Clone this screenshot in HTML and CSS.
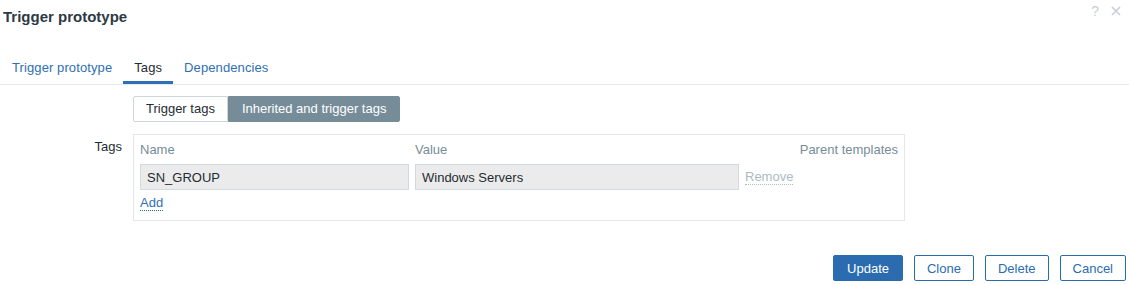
FILE: index.html
```html
<!DOCTYPE html>
<html>
<head>
    <meta charset="utf-8">
    <link rel="stylesheet" href="styles.css">
</head>
<body>
    <div class="dialog">
        <header class="dialog-head">
            <h4 class="dialog-title">Trigger prototype</h4>
            <div class="head-controls">
                <span class="head-help">?</span>
                <svg class="head-close" width="10" height="10" viewBox="0 0 10 10">
                    <path d="M1 1 L9 9 M9 1 L1 9" stroke="#c6cfd4" stroke-width="1.6" fill="none"/>
                </svg>
            </div>
        </header>

        <nav class="tabs">
            <a class="tab">Trigger prototype</a>
            <a class="tab tab-active">Tags</a>
            <a class="tab">Dependencies</a>
        </nav>

        <div class="form-grid">
            <div class="form-label"></div>
            <div class="form-field">
                <div class="seg">
                    <span class="seg-item">Trigger tags</span>
                    <span class="seg-item seg-on">Inherited and trigger tags</span>
                </div>
            </div>

            <div class="form-label tags-label">Tags</div>
            <div class="form-field">
                <div class="tags-box">
                    <div class="tags-head">Name</div>
                    <div class="tags-head">Value</div>
                    <div class="tags-head"></div>
                    <div class="tags-head tags-head-right">Parent templates</div>

                    <input class="tag-input" type="text" value="SN_GROUP" readonly>
                    <input class="tag-input" type="text" value="Windows Servers" readonly>
                    <div class="tag-action"><span class="link-off">Remove</span></div>
                    <div></div>

                    <div class="tags-add"><span class="link">Add</span></div>
                </div>
            </div>
        </div>

        <footer class="dialog-foot">
            <button class="btn btn-main">Update</button>
            <button class="btn">Clone</button>
            <button class="btn">Delete</button>
            <button class="btn">Cancel</button>
        </footer>
    </div>
</body>
</html>
```

FILE: styles.css
```css
* {
    box-sizing: border-box;
}
body {
    margin: 0;
    background: #ffffff;
    font-family: "Liberation Sans", Arial, sans-serif;
    font-size: 13px;
    color: #1f2c33;
}

/* header */
.dialog-head {
    display: flex;
    justify-content: space-between;
    align-items: flex-start;
    height: 54px;
    padding: 4px 8px 0 3px;
}
.dialog-title {
    margin: 4px 0 0;
    font-size: 15px;
    line-height: 18px;
    font-weight: bold;
    color: #2c3a45;
}
.head-controls {
    display: flex;
    align-items: center;
    gap: 12px;
    padding-top: 1px;
}
.head-help {
    font-size: 14px;
    line-height: 12px;
    color: #c6cfd4;
}

/* tabs */
.tabs {
    display: flex;
    padding-left: 1px;
    border-bottom: 1px solid #e6eaec;
}
.tab {
    padding: 6px 11px 5px;
    line-height: 16px;
    border-bottom: 3px solid transparent;
    color: #2f6fb5;
    letter-spacing: 0.1px;
    cursor: pointer;
}
.tab-active {
    color: #1f2c33;
    border-bottom-color: #2f6fb5;
}

/* form */
.form-grid {
    display: grid;
    grid-template-columns: 122px 772px;
    column-gap: 11px;
    row-gap: 12px;
    padding-top: 11px;
}
.form-label {
    text-align: right;
    line-height: 16px;
}
.tags-label {
    padding-top: 5px;
}

.seg {
    display: inline-flex;
    height: 26px;
}
.seg-item {
    padding: 0 12px;
    line-height: 24px;
    border: 1px solid #cfd6da;
    background: #ffffff;
    border-radius: 2px 0 0 2px;
}
.seg-on {
    padding: 0 13px;
    background: #768d99;
    border-color: #768d99;
    color: #ffffff;
    border-radius: 0 2px 2px 0;
}

/* tags table */
.tags-box {
    display: grid;
    grid-template-columns: 269px 324px auto 1fr;
    column-gap: 6px;
    border: 1px solid #e4e8ea;
    padding: 7px 6px 9px;
}
.tags-head {
    line-height: 16px;
    color: #768d99;
    margin-bottom: 6px;
}
.tags-head-right {
    text-align: right;
}
.tag-input {
    height: 26px;
    margin: 0;
    padding: 0 6px;
    border: 1px solid #d3d9dc;
    background: #ebebeb;
    font-family: "Liberation Sans", Arial, sans-serif;
    font-size: 13px;
    color: #1f2c33;
    outline: none;
}
.tag-action {
    display: flex;
    align-items: center;
}
.tags-add {
    grid-column: 1 / -1;
    margin-top: 4px;
    line-height: 17px;
}
.link {
    color: #2f6fb5;
    border-bottom: 1px dotted #2f6fb5;
    cursor: pointer;
}
.link-off {
    color: #acbbc2;
    border-bottom: 1px dotted #acbbc2;
    line-height: 15px;
}

/* footer */
.dialog-foot {
    display: flex;
    justify-content: flex-end;
    gap: 11px;
    padding: 34px 3px 0;
}
.btn {
    height: 26px;
    padding: 0 12px;
    border: 1px solid #2b6cb0;
    border-radius: 2px;
    background: #ffffff;
    color: #2b6cb0;
    font-family: "Liberation Sans", Arial, sans-serif;
    font-size: 13px;
    cursor: pointer;
}
.btn-main {
    padding: 0 13px;
    background: #2b6cb0;
    color: #ffffff;
}
```
